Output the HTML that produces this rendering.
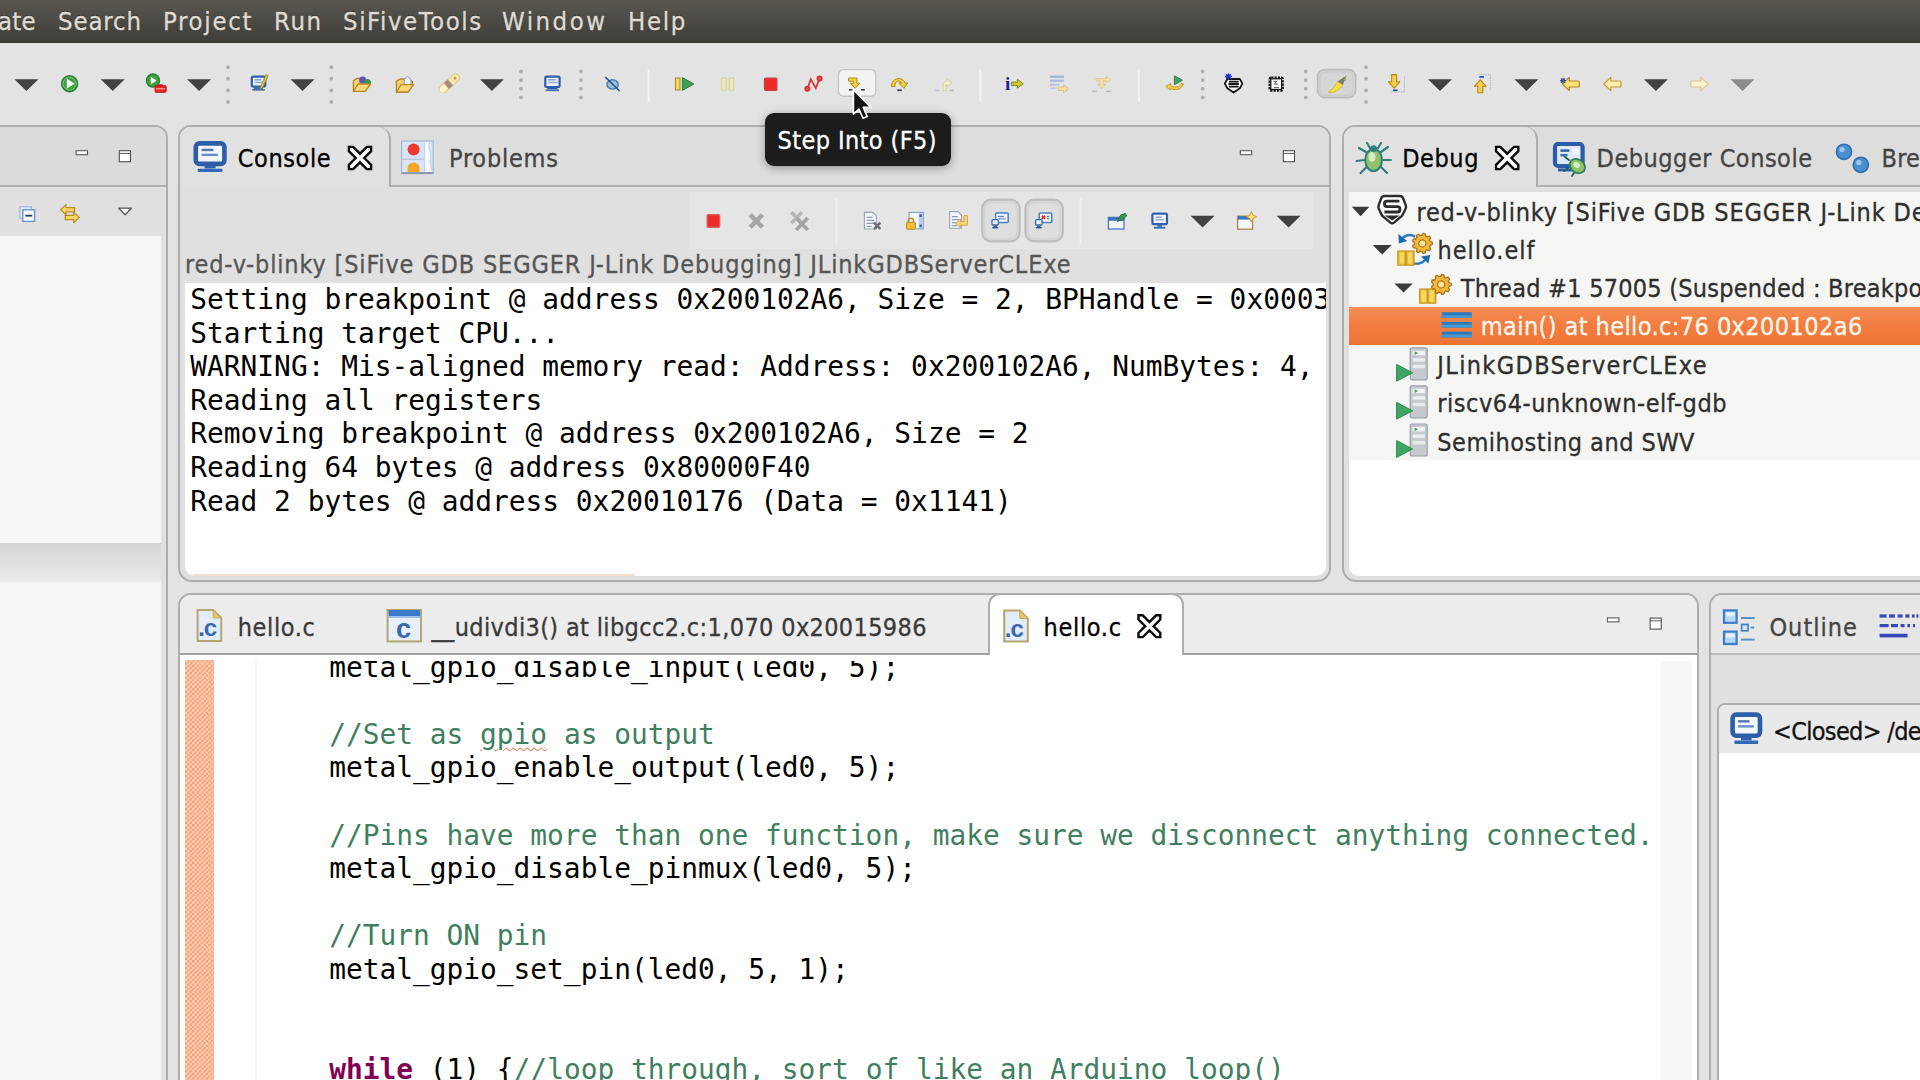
<!DOCTYPE html>
<html lang="en">
<head>
<meta charset="utf-8">
<title>Eclipse Debug</title>
<style>
html,body{margin:0;padding:0;}
body{width:1920px;height:1080px;overflow:hidden;position:relative;background:#e3e3e3;
 font-family:"DejaVu Sans Condensed","DejaVu Sans","Liberation Sans",sans-serif;color:#1a1a1a;}
.abs,.t,.m,.ui{position:absolute;}
.t,.m,.ui{white-space:pre;line-height:1;}
.m{font-family:"DejaVu Sans Mono","Liberation Mono",monospace;font-size:27.85px;color:#000;}
.ui{font-size:26px;color:#222;-webkit-text-stroke:0.3px currentColor;}
#menubar{position:absolute;left:0;top:0;width:1920px;height:43px;
 background:linear-gradient(#59574f 0,#4c4a45 45%,#403f3a 92%,#38372f 100%);}
#menubar .ui{color:#dfdbd2;font-size:25.5px;text-shadow:0 -1px 0 rgba(0,0,0,.35);}
.panel{position:absolute;border:2px solid #adadad;box-sizing:border-box;background:#e0e0e0;}
.hdr{position:absolute;left:0;right:0;top:0;background:#dddddd;border-bottom:2px solid #b2b2b2;box-sizing:border-box;}
.tab{position:absolute;top:-2px;box-sizing:border-box;background:#e2e2e2;border:2px solid #adadad;border-bottom:none;}
svg{position:absolute;overflow:visible;}
.cm,.m i{color:#3f7f5f;font-style:normal;}
.m b{color:#7f0055;font-weight:bold;}
.m u{text-decoration:underline wavy #e8604c 1.4px;text-underline-offset:3px;}
</style>
</head>
<body>

<!-- ===== menu bar ===== -->
<div id="menubar">
<!--MENU-->
 <span class="ui" style="left:-2.1px;top:9.2px;letter-spacing:0.300px">ate</span>
 <span class="ui" style="left:58.0px;top:9.2px;letter-spacing:0.867px">Search</span>
 <span class="ui" style="left:163.0px;top:9.2px;letter-spacing:1.687px">Project</span>
 <span class="ui" style="left:274.0px;top:9.2px;letter-spacing:1.611px">Run</span>
 <span class="ui" style="left:343.0px;top:9.2px;letter-spacing:1.578px">SiFiveTools</span>
 <span class="ui" style="left:502.0px;top:9.2px;letter-spacing:2.518px">Window</span>
 <span class="ui" style="left:628.0px;top:9.2px;letter-spacing:1.627px">Help</span>
<!--/MENU-->
</div>

<!-- ===== main toolbar ===== -->
<svg id="toolbar" style="left:0;top:0" width="1920" height="130" viewBox="0 0 1920 130">
<!--TOOLBAR-->
<polygon points="14.399999999999999,79.2 38.4,79.2 26.4,91" fill="#424242"/>
<polygon points="100.7,79.2 124.7,79.2 112.7,91" fill="#424242"/>
<polygon points="187.1,79.2 211.1,79.2 199.1,91" fill="#424242"/>
<polygon points="290.5,79.2 314.5,79.2 302.5,91" fill="#424242"/>
<polygon points="479.9,79.2 503.9,79.2 491.9,91" fill="#424242"/>
<polygon points="1428,79.2 1452,79.2 1440,91" fill="#424242"/>
<polygon points="1514.4,79.2 1538.4,79.2 1526.4,91" fill="#424242"/>
<polygon points="1643.9,79.2 1667.9,79.2 1655.9,91" fill="#424242"/>
<polygon points="1730.5,79.2 1754.5,79.2 1742.5,91" fill="#8c8c8c"/>
<circle cx="228" cy="67.2" r="1.9" fill="#adadad"/>
<circle cx="228" cy="78.7" r="1.9" fill="#adadad"/>
<circle cx="228" cy="90.4" r="1.9" fill="#adadad"/>
<circle cx="228" cy="101.9" r="1.9" fill="#adadad"/>
<circle cx="331.3" cy="67.2" r="1.9" fill="#adadad"/>
<circle cx="331.3" cy="78.7" r="1.9" fill="#adadad"/>
<circle cx="331.3" cy="90.4" r="1.9" fill="#adadad"/>
<circle cx="331.3" cy="101.9" r="1.9" fill="#adadad"/>
<circle cx="1366" cy="67.2" r="1.9" fill="#adadad"/>
<circle cx="1366" cy="78.7" r="1.9" fill="#adadad"/>
<circle cx="1366" cy="90.4" r="1.9" fill="#adadad"/>
<circle cx="1366" cy="101.9" r="1.9" fill="#adadad"/>
<circle cx="521" cy="71.5" r="1.9" fill="#adadad"/>
<circle cx="521" cy="80.1" r="1.9" fill="#adadad"/>
<circle cx="521" cy="88.7" r="1.9" fill="#adadad"/>
<circle cx="521" cy="97.3" r="1.9" fill="#adadad"/>
<circle cx="581" cy="71.5" r="1.9" fill="#adadad"/>
<circle cx="581" cy="80.1" r="1.9" fill="#adadad"/>
<circle cx="581" cy="88.7" r="1.9" fill="#adadad"/>
<circle cx="581" cy="97.3" r="1.9" fill="#adadad"/>
<circle cx="1202.7" cy="71.5" r="1.9" fill="#adadad"/>
<circle cx="1202.7" cy="80.1" r="1.9" fill="#adadad"/>
<circle cx="1202.7" cy="88.7" r="1.9" fill="#adadad"/>
<circle cx="1202.7" cy="97.3" r="1.9" fill="#adadad"/>
<circle cx="1305.8" cy="71.5" r="1.9" fill="#adadad"/>
<circle cx="1305.8" cy="80.1" r="1.9" fill="#adadad"/>
<circle cx="1305.8" cy="88.7" r="1.9" fill="#adadad"/>
<circle cx="1305.8" cy="97.3" r="1.9" fill="#adadad"/>
<rect x="647.6" y="69" width="2" height="33" fill="#f2f2f2"/>
<rect x="979.3" y="69" width="2" height="33" fill="#f2f2f2"/>
<rect x="1137.8" y="69" width="2" height="33" fill="#f2f2f2"/>
<g><circle cx="69.6" cy="83.7" r="8" fill="#3f9f43" stroke="#2b7d32" stroke-width="1.4"/><circle cx="69.6" cy="83.7" r="6.4" fill="none" stroke="#7cc47c" stroke-width="1"/><polygon points="66.8,78.6 66.8,88.8 74.6,83.7" fill="#f4fbf0"/></g>
<g><circle cx="153" cy="80.6" r="6.6" fill="#3f9f43" stroke="#2b7d32" stroke-width="1.3"/><polygon points="150.8,76.8 150.8,84.4 156.6,80.6" fill="#f4fbf0"/><rect x="155" y="85.6" width="11.2" height="6.8" rx="1.2" fill="#e52222" stroke="#c01414" stroke-width="0.8"/><rect x="158.4" y="84.3" width="4.4" height="1.6" fill="#c01414"/><rect x="156.2" y="88.3" width="8.8" height="1.1" fill="#ffb0a8"/></g>
<g><rect x="251.8" y="76.6" width="13.5" height="10" rx="1.6" fill="#e9f0fb" stroke="#2f5fa9" stroke-width="2.2"/><rect x="254.0" y="87.5" width="9.1" height="1.4" fill="#2f5fa9"/><rect x="252.3" y="89.0" width="12.5" height="1.6" fill="#3c6cb6"/><rect x="254.8" y="79.19999999999999" width="6.5" height="1.3" fill="#6f8fc4"/><rect x="254.8" y="81.8" width="8.5" height="1.3" fill="#8aa3cf"/><polygon points="266.2,74.2 268.2,75.8 262.4,88.2 260.2,89.6 260.4,87" fill="#d9c23a" stroke="#8a7a18" stroke-width="0.7"/></g>
<g><path d="M353.4,80.8 l3.4,-2.4 h4.2 l1.4,2.2 h7 v3.2 l-5.2,7.6 h-10.8 z" fill="#f9d06c" stroke="#b98524" stroke-width="1.3" stroke-linejoin="round"/><circle cx="362.6" cy="80.2" r="3.6" fill="#5a55b8"/><circle cx="367.4" cy="82.6" r="3.5" fill="#3a9444"/><path d="M353.4,91.39999999999999 l4.6,-7.4 h12.6 l-5.4,7.4 z" fill="#fbd978" stroke="#b98524" stroke-width="1.3" stroke-linejoin="round"/></g>
<g><path d="M396.4,81.4 l3.4,-2.4 h4.2 l1.4,2.2 h7 v3.2 l-5.2,7.6 h-10.8 z" fill="#f9d06c" stroke="#b98524" stroke-width="1.3" stroke-linejoin="round"/><path d="M404.2,86 v-6.6 l3.4,-3 l3.4,3 v6.6 z" fill="#f4f6fa" stroke="#7f93b4" stroke-width="1"/><path d="M396.4,92.0 l4.6,-7.4 h12.6 l-5.4,7.4 z" fill="#fbd978" stroke="#b98524" stroke-width="1.3" stroke-linejoin="round"/></g>
<g transform="rotate(-42 449.3 83.4)"><rect x="437.4" y="79.6" width="24" height="7.6" rx="3.6" fill="#f6e8a8" stroke="#e0c88a" stroke-width="1"/><rect x="445.4" y="79.4" width="5.4" height="8" fill="#a88d86"/><rect x="437.6" y="80.6" width="6.4" height="5.6" rx="2" fill="#fbf7cf"/><circle cx="457" cy="83.4" r="1.4" fill="#c79a4a"/></g>
<g><rect x="545.3" y="76.6" width="14.3" height="10.5" rx="1.6" fill="#e9f0fb" stroke="#2f5fa9" stroke-width="2.2"/><rect x="547.5" y="88.0" width="9.9" height="1.4" fill="#2f5fa9"/><rect x="545.8" y="89.5" width="13.3" height="1.6" fill="#3c6cb6"/><rect x="548.3" y="79.19999999999999" width="7.300000000000001" height="1.3" fill="#6f8fc4"/><rect x="548.3" y="81.8" width="9.3" height="1.3" fill="#8aa3cf"/></g>
<g><ellipse cx="612.6" cy="84.4" rx="5.6" ry="4.6" fill="#9cc0dc" stroke="#4c7fb0" stroke-width="1.6"/><line x1="605.2" y1="77" x2="619.6" y2="91" stroke="#2e4f9a" stroke-width="1.7"/></g>
<g><rect x="675.4" y="78" width="4.6" height="12" fill="#f3d45a" stroke="#a98a20" stroke-width="1"/><polygon points="682.4,77.6 682.4,90.4 693.8,84" fill="#3f9f55" stroke="#2b7d3a" stroke-width="1"/></g>
<g fill="#efe9b8" stroke="#d9d098" stroke-width="1"><rect x="721.6" y="78" width="4.6" height="12.2"/><rect x="729.2" y="78" width="4.6" height="12.2"/></g>
<rect x="764.6" y="78.2" width="12.2" height="12" rx="1" fill="#ee2b2b" stroke="#c8403a" stroke-width="1.4"/>
<g stroke="#d63434" fill="none" stroke-width="1.7"><path d="M807.6,88.6 L810.8,79.2 L815.8,88.2 L819.2,79.4"/><circle cx="807.4" cy="88.8" r="2.2" fill="#e65050"/><circle cx="819.6" cy="78.6" r="2.2" fill="#e65050"/></g>
<rect x="838.4" y="69.6" width="37.4" height="26.6" rx="5" fill="#f3f3f3" stroke="#c6c6c6" stroke-width="1.4"/>
<g><path d="M848.6,78 h8.4 v5.2 h2.8 l-4.6,5.2 l-4.6,-5.2 h2.8 v-2 h-4.8 z" fill="#f2cf45" stroke="#b08a1a" stroke-width="1" stroke-linejoin="round"/><rect x="849.0" y="89" width="3.6" height="1.6" fill="#3a3a5a"/><rect x="861.2" y="89" width="3.6" height="1.6" fill="#3a3a5a"/></g>
<g><path d="M891.6,86.4 c-0.6,-8.6 11,-10.6 13.4,-3.4 h2.6 l-3.8,5.4 l-5,-5.4 h2.8 c-1.6,-3.4 -7,-2.6 -6.6,3.4 z" fill="#f2cf45" stroke="#b08a1a" stroke-width="1" stroke-linejoin="round"/><rect x="897.4" y="89.4" width="4.4" height="1.7" fill="#3a3a5a"/></g>
<g><path d="M943,90.6 v-6 c0,-2.2 1.8,-3.4 4,-3.4 v-2.6 l5,4.2 l-5,4.2 v-2.6 c-0.8,0 -1.2,0.4 -1.2,1.2 v5 z" fill="#f1ecd0" stroke="#d8cfa4" stroke-width="1" stroke-linejoin="round"/><rect x="935.4" y="89.6" width="4" height="1.5" fill="#b8b8c4"/><rect x="949.6" y="89.6" width="4.4" height="1.5" fill="#b8b8c4"/></g>
<text x="1005" y="89.8" font-family="Liberation Serif,DejaVu Serif,serif" font-weight="bold" font-size="19" fill="#1b1bb0">i</text>
<path d="M1011.4,82.2 h6 v-2.8 l5.8,4.4 l-5.8,4.4 v-2.8 h-6 z" fill="#cfd030" stroke="#7e8010" stroke-width="1" stroke-linejoin="round"/>
<g><rect x="1050" y="75.6" width="14" height="2.2" fill="#9fb6d6"/><rect x="1050" y="79.6" width="14" height="2.2" fill="#a9bedb"/><rect x="1050" y="83.6" width="9" height="2.2" fill="#b4c6df"/><rect x="1050" y="87.4" width="7" height="1.6" fill="#c0cfe3"/><path d="M1058.4,87.2 h5 v-2.6 l5,4.2 l-5,4.2 v-2.6 h-5 z" fill="#f4deA0" stroke="#dcc27c" stroke-width="1" stroke-linejoin="round"/></g>
<g><path d="M1096,78.6 h10.4 v-2.4 l4.4,3.4 l-4.4,3.4 v-2.2 h-3.2 v3.6 h2.4 l-4,4.2 l-4,-4.2 h2.4 v-3.6 h-4 z" fill="#f6e3b4" stroke="#e0c690" stroke-width="1" stroke-linejoin="round"/><rect x="1092" y="90.6" width="4.6" height="1.5" fill="#b4b8c8"/><rect x="1106" y="90.6" width="4.6" height="1.5" fill="#b4b8c8"/></g>
<g><polygon points="1174.4,75.8 1174.4,84.8 1182.4,80.2" fill="#3f9f6a" stroke="#2b7d4a" stroke-width="0.9"/><path d="M1170.6,83.4 l-4.8,3 l4.4,3.6 v-2 c3.2,2.6 9.6,2.2 11.8,-1.6 l1.4,-2.6 l-2.4,-0.4 c-1.2,3.6 -6.4,5 -10.4,2.2 z" fill="#f5cf52" stroke="#c79a20" stroke-width="1" stroke-linejoin="round"/></g>
<g><path d="M1227.4,79 h12.4 l2.6,4.6 l-2.6,4.6 l-6.2,4.4 l-6.2,-4.4 l-2.6,-4.6 z" fill="#fff" stroke="#151515" stroke-width="1.8" stroke-linejoin="round"/><path d="M1229,81.6 h9.6 M1238.8,84 h-10.4 M1229,86.6 h9.6" stroke="#151515" stroke-width="1.9" fill="none"/><path d="M1225,76.4 h7 M1228.4,73.6 v5.8 M1226,74.2 l4.8,4.6 M1230.8,74.2 l-4.8,4.6" stroke="#1b37c8" stroke-width="1.5"/></g>
<g><rect x="1269.6" y="77.6" width="13.2" height="13" rx="1.6" fill="#fff" stroke="#111" stroke-width="2.2" stroke-dasharray="2.2 1.1"/><rect x="1270.8" y="78.8" width="10.8" height="10.6" fill="#fff" stroke="#111" stroke-width="1.2"/><path d="M1273.6,81.4 h3 l-2.2,2.8 h3.4 M1274,87.4 h5" stroke="#555" stroke-width="1" fill="none"/></g>
<rect x="1317.6" y="69.6" width="38" height="28" rx="7" fill="#d6d6d6" stroke="#bcbcbc" stroke-width="1.6"/><rect x="1320" y="72" width="33.2" height="23.2" rx="5" fill="none" stroke="#cdcdcd" stroke-width="1.6"/>
<g><path d="M1328.4,92.2 c4.6,1.8 11,-2.2 14.6,-7.4 l-5.4,-3.2 c-2.4,4.4 -5.6,8.2 -9.2,10.6 z" fill="#f7de48" stroke="#d8b82a" stroke-width="0.9"/><path d="M1337.6,81.6 l5.4,3.2 l3.4,-9.4 z" fill="#7d7d6a"/><path d="M1343.4,80.4 l3,-5 l-0.6,5.8 z" fill="#9aa77a"/></g>
<g><path d="M1391.6000000000001,74.6 h5 v7.2 h3.2 l-5.7,6.4 l-5.7,-6.4 h3.2 z" fill="#f7cf48" stroke="#b5861c" stroke-width="1.1" stroke-linejoin="round"/><path d="M1404.4,77 v15 M1391.4,91.8 h13" stroke="#aeb4c2" stroke-width="1" stroke-dasharray="1.4 1" fill="none"/><rect x="1393.0" y="89.4" width="4.6" height="1.8" fill="#2a55b0"/></g>
<g><path d="M1477.8000000000002,92.8 h5 v-6.6 h3.2 l-5.7,-6.4 l-5.7,6.4 h3.2 z" fill="#f7cf48" stroke="#b5861c" stroke-width="1.1" stroke-linejoin="round"/><path d="M1490.4,75 v15 M1478.4,74.6 h12" stroke="#aeb4c2" stroke-width="1" stroke-dasharray="1.4 1" fill="none"/><rect x="1479.4" y="76" width="4.6" height="1.8" fill="#2a55b0"/></g>
<path d="M1562.2,84 l7,-6.6 v3.6 h8.6 q1.6,0 1.6,1.6 v2.8 q0,1.6 -1.6,1.6 h-8.6 v3.6 z" fill="#fbe27a" stroke="#b5861c" stroke-width="1.2" stroke-linejoin="round"/>
<path d="M1560,80.6 h6 M1563,77.8 v5.6 M1560.8,78.4 l4.4,4.4 M1565.2,78.4 l-4.4,4.4" stroke="#3a4fa0" stroke-width="1.1"/>
<path d="M1603.8,84 l7,-6.6 v3.6 h8.6 q1.6,0 1.6,1.6 v2.8 q0,1.6 -1.6,1.6 h-8.6 v3.6 z" fill="#fdeeb0" stroke="#c8962a" stroke-width="1.2" stroke-linejoin="round"/>
<path d="M1708.0,84 l-7,-6.6 v3.6 h-8.6 q-1.6,0 -1.6,1.6 v2.8 q0,1.6 1.6,1.6 h8.6 v3.6 z" fill="#fbf3d2" stroke="#dcc48c" stroke-width="1.2" stroke-linejoin="round"/>
<!--/TOOLBAR-->
</svg>

<!-- ===== left panel ===== -->
<div id="leftp" class="panel" style="left:-20px;top:125px;width:188px;height:1000px;border-radius:0 13px 0 0;">
 <div class="hdr" style="height:60px;border-radius:0 11px 0 0;background:#dbdbdb"></div>
 <div class="abs" style="left:0;top:109px;width:179px;height:900px;background:#f6f7f5"></div>
 <div class="abs" style="left:0;top:416px;width:179px;height:39px;background:linear-gradient(#d6d5d2 0,#dddcda 35%,#e6e5e3 75%,#eeedeb 100%)"></div>
</div>
<svg id="lefticons" style="left:0;top:0" width="200" height="260" viewBox="0 0 200 260">
<!--LEFTICONS-->
<rect x="76.1" y="150.70000000000002" width="11.4" height="4" fill="#fff" stroke="#5c5c5c" stroke-width="1.1"/>
<g><rect x="119.3" y="150.7" width="11.2" height="11" fill="#fff" stroke="#4e4e4e" stroke-width="1.1"/><rect x="119.3" y="152.89999999999998" width="11.2" height="1" fill="#5a5a5a"/></g>
<g><rect x="19.8" y="206.8" width="11.6" height="11.4" fill="#dfe9f8" stroke="#9db6dc" stroke-width="1.2"/><rect x="22.8" y="209.8" width="11.8" height="11.6" fill="#f6f9fe" stroke="#6f94cc" stroke-width="1.4"/><rect x="25.4" y="214.8" width="6.8" height="1.8" fill="#223a6a"/></g>
<g fill="#f8d568" stroke="#b98a22" stroke-width="1.2" stroke-linejoin="round"><path d="M60.6,209.6 l5.4,-5 v3 h8.6 v4.2 h-8.6 v3 z"/><path d="M79.2,217.4 l-5.4,-5 v3 h-8.6 v4.2 h8.6 v3 z"/></g>
<polygon points="118.8,208.2 131.4,208.2 125.1,214.8" fill="#fff" stroke="#555" stroke-width="1.3" stroke-linejoin="round"/>
<!--/LEFTICONS-->
</svg>

<!-- ===== console panel ===== -->
<div id="consolep" class="panel" style="left:178px;top:125px;width:1153px;height:457px;border-radius:13px 13px 14px 14px;">
 <div class="hdr" style="height:60px;border-radius:11px 11px 0 0;"></div>
 <div class="tab" style="left:0;top:0;width:211px;height:60px;border-radius:11px 12px 0 0;border-left:none;border-top:none;background:#e1e1e1"></div>
 <div class="abs" style="left:509px;top:65px;width:624px;height:57px;background:#e5e5e5"></div>
 <div class="abs" id="context" style="left:5px;top:156px;width:1141px;height:293px;background:#fff;border-radius:0 0 10px 10px;overflow:hidden">
<!--CONSOLETEXT-->
<div class="m" style="left:5.3px;top:3.2px">Setting breakpoint @ address 0x200102A6, Size = 2, BPHandle = 0x0003</div>
<div class="m" style="left:5.3px;top:36.8px">Starting target CPU...</div>
<div class="m" style="left:5.3px;top:70.3px">WARNING: Mis-aligned memory read: Address: 0x200102A6, NumBytes: 4, </div>
<div class="m" style="left:5.3px;top:103.9px">Reading all registers</div>
<div class="m" style="left:5.3px;top:137.4px">Removing breakpoint @ address 0x200102A6, Size = 2</div>
<div class="m" style="left:5.3px;top:171.0px">Reading 64 bytes @ address 0x80000F40</div>
<div class="m" style="left:5.3px;top:204.5px">Read 2 bytes @ address 0x20010176 (Data = 0x1141)</div>
<!--/CONSOLETEXT-->
 <div class="abs" style="left:8px;top:291px;width:442px;height:2px;background:#f6ddd1"></div>
 </div>
</div>

<!-- ===== debug panel ===== -->
<div id="debugp" class="panel" style="left:1342px;top:125px;width:700px;height:457px;border-radius:13px 0 0 14px;">
 <div class="hdr" style="height:60px;border-radius:11px 0 0 0;"></div>
 <div class="tab" style="left:0;top:0;width:194px;height:60px;border-radius:11px 12px 0 0;border-left:none;border-top:none;background:#e1e1e1"></div>
 <div class="abs" style="left:5px;top:65px;width:700px;height:384px;background:#fff;border-radius:0 0 0 10px;"></div>
 <div class="abs" style="left:5px;top:65px;width:700px;height:268px;background:#f5f6f4;"></div>
 <div class="abs" style="left:5px;top:180px;width:700px;height:38px;background:linear-gradient(#f68d54 0,#f27d40 45%,#ef7536 100%)"></div>
</div>

<!-- ===== editor panel ===== -->
<div id="editorp" class="panel" style="left:178px;top:593px;width:1521px;height:600px;border-radius:13px 13px 0 0;">
 <div class="hdr" style="height:60px;border-radius:11px 11px 0 0;background:#ececec;border-bottom-color:#a0a0a0"></div>
 <div class="tab" style="left:808px;width:196px;height:63px;border-radius:12px 12px 0 0;background:#fff"></div>
 <div class="abs" style="left:0;top:60px;width:1517px;height:500px;background:#fff"></div>
 <div class="abs" style="left:1481px;top:66px;width:31px;height:500px;background:#f7f7f7"></div>
 <div class="abs" style="left:75px;top:66px;width:2px;height:500px;background:#f3f3f3"></div>
 <div class="abs" id="orangestrip" style="left:5px;top:65px;width:29px;height:500px;background-color:#fdccae;background-image:linear-gradient(45deg,#f2a27c 25%,transparent 25%,transparent 75%,#f2a27c 75%),linear-gradient(45deg,#f2a27c 25%,transparent 25%,transparent 75%,#f2a27c 75%);background-size:4.7px 4.7px;background-position:0 0,2.35px 2.35px;"></div>
 <div class="abs" id="code" style="left:0;top:66px;width:1482px;height:500px;overflow:hidden">
<!--CODE-->
<div class="m" style="left:149.2px;top:-7.2px">metal_gpio_disable_input(led0, 5);</div>
<div class="m cm" style="left:149.2px;top:59.9px">//Set as <u>gpio</u> as output</div>
<div class="m" style="left:149.2px;top:93.4px">metal_gpio_enable_output(led0, 5);</div>
<div class="m cm" style="left:149.2px;top:160.5px">//Pins have more than one function, make sure we disconnect anything connected.</div>
<div class="m" style="left:149.2px;top:194.1px">metal_gpio_disable_pinmux(led0, 5);</div>
<div class="m cm" style="left:149.2px;top:261.2px">//Turn ON pin</div>
<div class="m" style="left:149.2px;top:294.7px">metal_gpio_set_pin(led0, 5, 1);</div>
<div class="m" style="left:149.2px;top:395.4px"><b>while</b> (1) {<i>//loop through, sort of like an Arduino loop()</i></div>
<!--/CODE-->
 </div>
</div>

<!-- ===== outline panel ===== -->
<div id="outlinep" class="panel" style="left:1709px;top:593px;width:400px;height:600px;border-radius:13px 0 0 0;">
 <div class="hdr" style="height:60px;border-radius:11px 0 0 0;background:#e6e6e6;border-bottom-color:#bcbcbc"></div>
 <div class="abs" style="left:6px;top:108px;width:400px;height:500px;border:2px solid #aeaeae;border-radius:8px 0 0 0;background:#fff;box-sizing:border-box">
  <div class="abs" style="left:0;top:0;width:400px;height:48px;background:#e9e9e9;border-radius:6px 0 0 0"></div>
 </div>
</div>

<!-- ===== panel text + icons ===== -->
<div id="labels">
<!--LABELS-->
<span class="ui" style="left:237.8px;top:146.3px;font-size:25px;letter-spacing:0.576px;color:#000">Console</span>
<span class="ui" style="left:449.0px;top:146.3px;font-size:25px;letter-spacing:0.775px;color:#444">Problems</span>
<span class="ui" style="left:185.0px;top:251.8px;font-size:25px;letter-spacing:0.841px;color:#555">red-v-blinky [SiFive GDB SEGGER J-Link Debugging] JLinkGDBServerCLExe</span>
<span class="ui" style="left:1402.2px;top:146.0px;font-size:25px;letter-spacing:0.578px;color:#000">Debug</span>
<span class="ui" style="left:1596.6px;top:146.0px;font-size:25px;letter-spacing:0.507px;color:#444">Debugger Console</span>
<span class="ui" style="left:1881.5px;top:146.0px;font-size:25px;letter-spacing:0.200px;color:#444">Bre</span>
<span class="ui" style="left:1416.4px;top:199.7px;font-size:25px;letter-spacing:0.841px;color:#2e2e2e">red-v-blinky [SiFive GDB SEGGER J-Link De</span>
<span class="ui" style="left:1437.6px;top:237.5px;font-size:25px;letter-spacing:0.955px;color:#2e2e2e">hello.elf</span>
<span class="ui" style="left:1460.7px;top:275.8px;font-size:25px;letter-spacing:0.242px;color:#2e2e2e">Thread #1 57005 (Suspended : Breakpo</span>
<span class="ui" style="left:1480.7px;top:314.4px;font-size:25px;letter-spacing:0.419px;color:#fff8ee">main() at hello.c:76 0x200102a6</span>
<span class="ui" style="left:1437.3px;top:352.7px;font-size:25px;letter-spacing:1.344px;color:#2e2e2e">JLinkGDBServerCLExe</span>
<span class="ui" style="left:1437.3px;top:391.1px;font-size:25px;letter-spacing:0.530px;color:#2e2e2e">riscv64-unknown-elf-gdb</span>
<span class="ui" style="left:1437.3px;top:429.5px;font-size:25px;letter-spacing:0.504px;color:#2e2e2e">Semihosting and SWV</span>
<span class="ui" style="left:237.7px;top:615.1px;font-size:25px;letter-spacing:0.646px;color:#3a3a3a">hello.c</span>
<span class="ui" style="left:431.5px;top:615.1px;font-size:25px;letter-spacing:0.360px;color:#3a3a3a">__udivdi3() at libgcc2.c:1,070 0x20015986</span>
<span class="ui" style="left:1043.5px;top:615.1px;font-size:25px;letter-spacing:0.679px;color:#000">hello.c</span>
<span class="ui" style="left:1769.4px;top:615.1px;font-size:25px;letter-spacing:1.021px;color:#444">Outline</span>
<span class="ui" style="left:1773.0px;top:718.5px;font-size:25px;letter-spacing:-0.680px;color:#111">&lt;Closed&gt; /de</span>
<!--/LABELS-->
</div>
<svg id="icons" style="left:0;top:0" width="1920" height="1080" viewBox="0 0 1920 1080">
<!--ICONS-->
<g><rect x="195.8" y="143.4" width="28.6" height="20.480000000000004" rx="3.6" fill="#f2f6fd" stroke="#2d5fa9" stroke-width="4.6"/><rect x="204.55800000000002" y="165.68" width="11.084000000000001" height="2.754" fill="#2f63ae"/><rect x="197.71200000000002" y="168.63400000000001" width="24.776" height="3.366" rx="1" fill="#3568b4"/><rect x="201.62400000000002" y="148.744" width="11.736" height="2.4" fill="#5674b4"/><rect x="201.62400000000002" y="153.64000000000001" width="16.3" height="2.4" fill="#6f8ac4"/></g>
<polygon points="348.9,146.9 353.2,146.9 360.0,153.7 366.8,146.9 371.1,146.9 371.1,151.2 364.3,158.0 371.1,164.8 371.1,169.1 366.8,169.1 360.0,162.3 353.2,169.1 348.9,169.1 348.9,164.8 355.7,158.0 348.9,151.2" fill="#fff" stroke="#0a0a0a" stroke-width="2.4" stroke-linejoin="miter"/>
<g><rect x="401.6" y="141" width="31.6" height="32.6" fill="#d7e6f7" stroke="#a8b8cc" stroke-width="1.2"/><path d="M424.4,141.6 h5.4 c-2.6,7 2.2,9.4 0.6,16.6 c-1,5 0.8,10 2.4,14.8 h-8.4 z" fill="#f4f8fd" stroke="#b8c6d8" stroke-width="0.8"/><rect x="402" y="158.6" width="22" height="1.2" fill="#b4c4d8"/><circle cx="413.6" cy="149.6" r="6" fill="#ec3a30"/><path d="M407.6,172.8 v-4.6 a6,5.6 0 0 1 12,0 v4.6 z" fill="#f5a623"/><rect x="401.6" y="172" width="31.6" height="2" fill="#8f9cb0"/></g>
<rect x="1240.3" y="150.70000000000002" width="11.4" height="4" fill="#fff" stroke="#5c5c5c" stroke-width="1.1"/>
<g><rect x="1283.3" y="150.7" width="11.2" height="11" fill="#fff" stroke="#4e4e4e" stroke-width="1.1"/><rect x="1283.3" y="152.89999999999998" width="11.2" height="1" fill="#5a5a5a"/></g>
<rect x="707.2" y="214.8" width="12.4" height="12.4" rx="1" fill="#ee2b2b" stroke="#d86058" stroke-width="1.4"/>
<g stroke="#a6a6a6" stroke-width="4.6" stroke-linecap="square"><path d="M751.8,216.4 l9,9.2 M760.8,216.4 l-9,9.2"/></g>
<g stroke="#a4a4a4" stroke-width="3.6" stroke-linecap="square"><path d="M792.6,213.6 l8,8.4 M800.6,213.6 l-8,8.4" stroke="#b8b8b8"/><path d="M797.4,219.4 l9,9.2 M806.4,219.4 l-9,9.2"/></g>
<rect x="835.4" y="198" width="2" height="46" fill="#efefef"/><rect x="1079.6" y="198" width="2" height="46" fill="#efefef"/>
<g><path d="M864.4,212.4 h8.4 l3.6,3.6 v13 h-12 z" fill="#f4f6fa" stroke="#9aa4b4" stroke-width="1.1"/><path d="M866.6,217.4 h6 M866.6,220.4 h7.6 M866.6,223.4 h7.6 M866.6,226.4 h5" stroke="#8c9cb8" stroke-width="1.1"/><path d="M874,222.6 l6.4,6.4 M880.4,222.6 l-6.4,6.4" stroke="#6a6a6a" stroke-width="2.4"/></g>
<g><rect x="909" y="212.4" width="14.4" height="16.4" fill="#f8fafd" stroke="#8da4c4" stroke-width="1.2"/><rect x="918.6" y="213" width="4.2" height="15.2" fill="#b9cdea"/><rect x="919.4" y="214.4" width="2.6" height="2.6" fill="#3f66b0"/><rect x="919.4" y="224.6" width="2.6" height="2.6" fill="#3f66b0"/><path d="M908.4,222.6 v-1.8 a2.6,2.6 0 0 1 5.2,0 v1.8" fill="none" stroke="#b98a22" stroke-width="1.5"/><rect x="906.6" y="222.2" width="8.8" height="7" rx="0.8" fill="#f5bf3a" stroke="#b98a22" stroke-width="1"/></g>
<g><path d="M949.6,211.6 h8.4 l3.6,3.6 v13 h-12 z" fill="#f4f6fa" stroke="#9aa4b4" stroke-width="1.1"/><path d="M951.8000000000001,216.6 h6 M951.8000000000001,219.6 h7.6 M951.8000000000001,222.6 h7.6 M951.8000000000001,225.6 h5" stroke="#8c9cb8" stroke-width="1.1"/><path d="M964,215.6 v6 h-3.6 v-2.6 l-4.8,4.4 l4.8,4.4 v-2.6 h7 v-9.6 z" fill="#f7d878" stroke="#c8a040" stroke-width="0.9" stroke-linejoin="round"/></g>
<rect x="982.2" y="199.6" width="37.4" height="41.8" rx="9" fill="#dedede" stroke="#bdbdbd" stroke-width="2.2"/><rect x="984.6" y="202" width="32.6" height="37" rx="7" fill="none" stroke="#d2d2d2" stroke-width="1.4"/>
<rect x="1025.4" y="199.6" width="37.4" height="41.8" rx="9" fill="#dedede" stroke="#bdbdbd" stroke-width="2.2"/><rect x="1027.8000000000002" y="202" width="32.6" height="37" rx="7" fill="none" stroke="#d2d2d2" stroke-width="1.4"/>
<g><rect x="995.6" y="213" width="12.6" height="9.4" rx="1" fill="#f4f8fd" stroke="#4a80c4" stroke-width="1.5"/><rect x="998.0" y="215.8" width="6" height="1.3" fill="#5a7ec0"/><rect x="998.0" y="218.2" width="7.6" height="1.3" fill="#7a98cc"/><rect x="992.0" y="219.6" width="6.4" height="5.4" rx="1" fill="#e8f0fa" stroke="#3f6aa8" stroke-width="1.3"/><rect x="993.4" y="225.6" width="3.6" height="1.4" fill="#2f5a98"/><rect x="992.2" y="227" width="6" height="1.4" fill="#2f5a98"/></g>
<g><rect x="1039.2" y="213" width="12.6" height="9.4" rx="1" fill="#f4f8fd" stroke="#4a80c4" stroke-width="1.5"/><path d="M1041.8,215.6 l3.4,3.4 M1045.2,215.6 l-3.4,3.4" stroke="#d83030" stroke-width="1.7"/><rect x="1047.0" y="215.8" width="2.2" height="1.3" fill="#5a7ec0"/><rect x="1047.0" y="218.2" width="2.2" height="1.3" fill="#5a7ec0"/><rect x="1035.6000000000001" y="219.6" width="6.4" height="5.4" rx="1" fill="#e8f0fa" stroke="#3f6aa8" stroke-width="1.3"/><rect x="1037.0" y="225.6" width="3.6" height="1.4" fill="#2f5a98"/><rect x="1035.8" y="227" width="6" height="1.4" fill="#2f5a98"/></g>
<g><rect x="1108.4" y="217.4" width="15.6" height="11.6" fill="#f4f7fc" stroke="#4a78ba" stroke-width="1.3"/><rect x="1108.4" y="217.4" width="15.6" height="3.4" fill="#3b74c4"/><path d="M1117.4,221.4 l3.4,-6.6 l4.6,-1.4 l1.2,2.6 l-3.6,3.4 z" fill="#2f9a4a" stroke="#1f6a30" stroke-width="0.9"/></g>
<g><rect x="1152.4" y="213.6" width="14.6" height="10.6" rx="1.4" fill="#eef3fc" stroke="#2f63ae" stroke-width="2.2"/><rect x="1155.6" y="216.6" width="6" height="1.2" fill="#6f8dc6"/><rect x="1155.6" y="219.2" width="8.4" height="1.2" fill="#8aa2d0"/><rect x="1157.4" y="225.2" width="4.6" height="1.6" fill="#2f63ae"/><rect x="1154" y="226.8" width="11.4" height="1.8" fill="#3568b4"/></g>
<polygon points="1190.6,215.8 1214.6,215.8 1202.6,227.4" fill="#424242"/>
<g><rect x="1237.6" y="216.2" width="15" height="13" fill="#f6f8fc" stroke="#a08a4a" stroke-width="1.3"/><rect x="1237.6" y="216.2" width="15" height="3.4" fill="#3b74c4"/><path d="M1251.4,211.6 l1.6,3.6 l3.6,1.6 l-3.6,1.6 l-1.6,3.6 l-1.6,-3.6 l-3.6,-1.6 l3.6,-1.6 z" fill="#fbe27a" stroke="#c89a2a" stroke-width="0.9"/></g>
<polygon points="1276.6,215.8 1300.6,215.8 1288.6,227.4" fill="#424242"/>
<g><g stroke="#2f7f7a" stroke-width="2.2" stroke-linecap="round" fill="none"><path d="M1366,152 l-7,-4 M1364.6,160 l-8,1 M1366.6,167 l-6,6 M1381,152 l7,-5 M1383,160 l8,0 M1381,167 l6,6 M1370,148 l-3,-5 M1378,148 l3,-5"/></g><ellipse cx="1373.6" cy="160" rx="8.4" ry="11" fill="#8fc06a" stroke="#2f7f7a" stroke-width="2"/><ellipse cx="1372" cy="157" rx="3.6" ry="5" fill="#d4ecc0"/><circle cx="1373.6" cy="148.6" r="3.4" fill="#2f7f7a"/></g>
<polygon points="1496.1,146.9 1500.4,146.9 1507.2,153.7 1514.0,146.9 1518.3,146.9 1518.3,151.2 1511.5,158.0 1518.3,164.8 1518.3,169.1 1514.0,169.1 1507.2,162.3 1500.4,169.1 1496.1,169.1 1496.1,164.8 1502.9,158.0 1496.1,151.2" fill="#fff" stroke="#0a0a0a" stroke-width="2.4" stroke-linejoin="miter"/>
<g><rect x="1555" y="144" width="27.6" height="22" rx="3" fill="#dfe8f7" stroke="#2a5ca8" stroke-width="4.2"/><rect x="1560.4" y="149.4" width="9" height="2.4" fill="#2a5ca8"/><rect x="1560.4" y="154" width="7" height="2.4" fill="#3a6cb8"/><rect x="1572.4" y="148.6" width="6.4" height="5.6" fill="#f4f8fe"/><rect x="1558" y="168.4" width="14" height="3" fill="#2a5ca8"/><g stroke="#1f5f5a" stroke-width="1.8" stroke-linecap="round"><path d="M1569,160 l-4,-3 M1568,168 l-4,3 M1574,173 l-2,3"/></g><ellipse cx="1577.4" cy="166" rx="8.2" ry="6.6" transform="rotate(35 1577.4 166)" fill="#8fc06a" stroke="#2f7f5a" stroke-width="1.8"/><ellipse cx="1576.6" cy="165" rx="3.6" ry="2.6" transform="rotate(35 1576.6 165)" fill="#d4ecc0"/></g>
<g fill="#4b90cf" stroke="#2f6fae" stroke-width="1.6"><circle cx="1844" cy="151.8" r="7.6"/><circle cx="1860.8" cy="164.8" r="7.6"/></g><circle cx="1842" cy="149.6" r="2.6" fill="#9cc8ee"/><circle cx="1858.8" cy="162.6" r="2.6" fill="#9cc8ee"/>
<polygon points="1351.8,206.8 1369.4,206.8 1360.6,216.2" fill="#3a3a3a"/>
<polygon points="1372.8,245 1391.6,245 1382.1999999999998,254.6" fill="#3a3a3a"/>
<polygon points="1394.4,283.4 1412.8,283.4 1403.6,292.6" fill="#3a3a3a"/>
<g><path d="M1384.6,196 h15.2 q2.4,0 3.2,2 l2.8,7.4 q0.6,1.8 -0.2,3.4 l-2.8,5.8 q-0.8,1.6 -2.4,2.6 l-6.4,5.4 q-1.8,1.4 -3.6,0 l-6.4,-5.4 q-1.6,-1 -2.4,-2.6 l-2.8,-5.8 q-0.8,-1.6 -0.2,-3.4 l2.8,-7.4 q0.8,-2 3.2,-2 z" fill="#fff" stroke="#2c2c2c" stroke-width="2.4" stroke-linejoin="round"/><path d="M1399.4,201.2 h-12.4 q-2.6,0 -2.6,2.6 q0,2.8 2.6,2.8 h10.4 q2.6,0 2.6,2.6 q0,2.8 -2.6,2.8 h-13" fill="none" stroke="#2c2c2c" stroke-width="2.8"/><path d="M1384.6,215.4 h15.2 l-7.6,5 z" fill="#2c2c2c"/></g>
<g fill="none" stroke="#2f78c0" stroke-width="2.4"><path d="M1415,236.6 q-7,-4 -13,2"/><path d="M1414,263.4 q8,1.6 12,-5"/></g><polygon points="1398.4,234 1398.8,243.6 1407.2,241" fill="#1f68b0"/><polygon points="1430.2,255 1421,256.4 1428.4,263.6" fill="#1f68b0"/>
<g><rect x="1397.2" y="250.4" width="17.4" height="15.4" fill="#c89a1e"/><rect x="1399.0" y="252.0" width="5.6" height="12.2" fill="#f6d860" stroke="#e8b830" stroke-width="0.8"/><rect x="1407.2" y="252.0" width="5.6" height="12.2" fill="#f6d860" stroke="#e8b830" stroke-width="0.8"/></g>
<g><polygon points="1432.3,242.3 1432.3,244.5 1430.2,245.3 1429.6,246.9 1430.7,248.9 1429.3,250.6 1427.1,249.8 1425.6,250.7 1425.2,253.0 1423.0,253.4 1421.9,251.4 1420.2,251.1 1418.4,252.6 1416.5,251.5 1416.9,249.2 1415.7,247.8 1413.4,247.8 1412.7,245.8 1414.4,244.3 1414.4,242.5 1412.7,241.0 1413.4,239.0 1415.7,239.0 1416.9,237.6 1416.5,235.3 1418.4,234.2 1420.2,235.7 1421.9,235.4 1423.0,233.4 1425.2,233.8 1425.6,236.1 1427.1,237.0 1429.3,236.2 1430.7,237.9 1429.6,239.9 1430.2,241.5" fill="#f4b63a" stroke="#a8741a" stroke-width="1.3" stroke-linejoin="round"/><circle cx="1422.4" cy="243.4" r="3.6" fill="#fbe29a" stroke="#a8741a" stroke-width="1.2"/></g>
<g><rect x="1419" y="288.4" width="17.4" height="15.4" fill="#c89a1e"/><rect x="1420.8" y="290.0" width="5.6" height="12.2" fill="#f6d860" stroke="#e8b830" stroke-width="0.8"/><rect x="1429" y="290.0" width="5.6" height="12.2" fill="#f6d860" stroke="#e8b830" stroke-width="0.8"/></g>
<g><polygon points="1451.1,283.3 1451.1,285.5 1449.0,286.3 1448.4,287.9 1449.5,289.9 1448.1,291.6 1445.9,290.8 1444.4,291.7 1444.0,294.0 1441.8,294.4 1440.7,292.4 1439.0,292.1 1437.2,293.6 1435.3,292.5 1435.7,290.2 1434.5,288.8 1432.2,288.8 1431.5,286.8 1433.2,285.3 1433.2,283.5 1431.5,282.0 1432.2,280.0 1434.5,280.0 1435.7,278.6 1435.3,276.3 1437.2,275.2 1439.0,276.7 1440.7,276.4 1441.8,274.4 1444.0,274.8 1444.4,277.1 1445.9,278.0 1448.1,277.2 1449.5,278.9 1448.4,280.9 1449.0,282.5" fill="#f4b63a" stroke="#a8741a" stroke-width="1.3" stroke-linejoin="round"/><circle cx="1441.2" cy="284.4" r="3.6" fill="#fbe29a" stroke="#a8741a" stroke-width="1.2"/></g>
<rect x="1441.8" y="312.2" width="30" height="5.8" fill="#2f7ab8"/><rect x="1441.8" y="315.2" width="30" height="2.8" fill="#4a9ad0"/>
<rect x="1441.8" y="321.8" width="30" height="5.8" fill="#2f7ab8"/><rect x="1441.8" y="324.8" width="30" height="2.8" fill="#4a9ad0"/>
<rect x="1441.8" y="331.6" width="30" height="5.8" fill="#2f7ab8"/><rect x="1441.8" y="334.6" width="30" height="2.8" fill="#4a9ad0"/>
<g><rect x="1410.2" y="347.8" width="17" height="32" rx="2" fill="#c6cace" stroke="#9a9fa6" stroke-width="1.2"/><rect x="1412.6" y="350.8" width="12.2" height="4.4" fill="#f2f3f4"/><rect x="1412.6" y="358.2" width="12.2" height="3.4" fill="#eceeef"/><rect x="1412.6" y="364.8" width="12.2" height="3.4" fill="#e8eaec"/><polygon points="1414.6,351.2 1414.6,355.0 1418,353.0" fill="#4a9a5a"/><polygon points="1396.6,364.40000000000003 1396.6,381.2 1412.6,372.8" fill="#3fa564" stroke="#2f8a4e" stroke-width="1"/></g>
<g><rect x="1410.2" y="385.8" width="17" height="32" rx="2" fill="#c6cace" stroke="#9a9fa6" stroke-width="1.2"/><rect x="1412.6" y="388.8" width="12.2" height="4.4" fill="#f2f3f4"/><rect x="1412.6" y="396.2" width="12.2" height="3.4" fill="#eceeef"/><rect x="1412.6" y="402.8" width="12.2" height="3.4" fill="#e8eaec"/><polygon points="1414.6,389.2 1414.6,393.0 1418,391.0" fill="#4a9a5a"/><polygon points="1396.6,402.40000000000003 1396.6,419.2 1412.6,410.8" fill="#3fa564" stroke="#2f8a4e" stroke-width="1"/></g>
<g><rect x="1410.2" y="424" width="17" height="32" rx="2" fill="#c6cace" stroke="#9a9fa6" stroke-width="1.2"/><rect x="1412.6" y="427" width="12.2" height="4.4" fill="#f2f3f4"/><rect x="1412.6" y="434.4" width="12.2" height="3.4" fill="#eceeef"/><rect x="1412.6" y="441" width="12.2" height="3.4" fill="#e8eaec"/><polygon points="1414.6,427.4 1414.6,431.2 1418,429.2" fill="#4a9a5a"/><polygon points="1396.6,440.6 1396.6,457.4 1412.6,449" fill="#3fa564" stroke="#2f8a4e" stroke-width="1"/></g>
<g><path d="M197.6,610 h15.6 l8,8 v23 h-23.6 z" fill="#e3ecf9" stroke="#b3a574" stroke-width="2"/><path d="M213.2,610 v8 h8 z" fill="#e8c66a" stroke="#c8a85a" stroke-width="1"/><text x="198.2" y="636.4" font-family="Liberation Sans,DejaVu Sans,sans-serif" font-weight="bold" font-size="24" letter-spacing="-1" fill="#3a68a8">.c</text></g>
<g><path d="M1004.2,610.4 h15.6 l8,8 v23 h-23.6 z" fill="#e3ecf9" stroke="#b3a574" stroke-width="2"/><path d="M1019.8000000000001,610.4 v8 h8 z" fill="#e8c66a" stroke="#c8a85a" stroke-width="1"/><text x="1004.8000000000001" y="636.8" font-family="Liberation Sans,DejaVu Sans,sans-serif" font-weight="bold" font-size="24" letter-spacing="-1" fill="#3a68a8">.c</text></g>
<g><rect x="387.6" y="610" width="33.4" height="31.4" fill="#e6effa" stroke="#b3a574" stroke-width="2"/><rect x="388.6" y="610" width="31.4" height="6.4" fill="#3b7acb"/><rect x="388.6" y="616.4" width="31.4" height="1.6" fill="#9cc0ea"/><text x="396" y="637.6" font-family="Liberation Sans,DejaVu Sans,sans-serif" font-weight="bold" font-size="27" fill="#3a68a8">c</text></g>
<polygon points="1138.5,615.3 1142.7,615.3 1149.4,622.0 1156.1,615.3 1160.3,615.3 1160.3,619.5 1153.6,626.2 1160.3,632.9 1160.3,637.1 1156.1,637.1 1149.4,630.4 1142.7,637.1 1138.5,637.1 1138.5,632.9 1145.2,626.2 1138.5,619.5" fill="#fff" stroke="#0a0a0a" stroke-width="2.4" stroke-linejoin="miter"/>
<rect x="1607.5" y="617.9" width="11.4" height="4" fill="#fff" stroke="#5c5c5c" stroke-width="1.1"/>
<g><rect x="1650.1" y="618.1" width="11.2" height="11" fill="#fff" stroke="#4e4e4e" stroke-width="1.1"/><rect x="1650.1" y="620.3000000000001" width="11.2" height="1" fill="#5a5a5a"/></g>
<g><rect x="1724" y="610.4" width="12.6" height="12.4" fill="#b4d8f8" stroke="#3f7cc6" stroke-width="2.2"/><rect x="1726" y="612.4" width="8.6" height="4" fill="#e4f2fd"/><rect x="1724" y="631.6" width="12.6" height="12.4" fill="#b4d8f8" stroke="#3f7cc6" stroke-width="2.2"/><rect x="1726" y="633.6" width="8.6" height="4" fill="#e4f2fd"/><rect x="1741" y="617" width="13.6" height="2" fill="#5a8fcc"/><rect x="1741" y="638.6" width="13.6" height="2" fill="#5a8fcc"/><rect x="1741.6" y="624.4" width="6.4" height="6.4" fill="#cfe4f8" stroke="#3f7cc0" stroke-width="1.6"/><rect x="1750.6" y="626.6" width="3.6" height="2" fill="#5a8fcc"/></g>
<g fill="#3548b8"><rect x="1879.6" y="614.4" width="7" height="3.2"/><rect x="1889" y="614.4" width="6" height="3.2"/><rect x="1897.6" y="614.4" width="5" height="3.2"/><rect x="1905.4" y="614.4" width="4" height="3.2"/><rect x="1912" y="614.4" width="2.6" height="3.2"/><rect x="1916.4" y="614.4" width="2" height="3.2"/><rect x="1879.6" y="624" width="9" height="3.2"/><rect x="1891" y="624" width="7" height="3.2"/><rect x="1900.6" y="624" width="4" height="3.2"/><rect x="1907.4" y="624" width="2.6" height="3.2"/><rect x="1913" y="624" width="2" height="3.2"/><rect x="1879.6" y="633.8" width="28" height="3.6"/></g>
<g><rect x="1732.6" y="714.6" width="27.4" height="21.12" rx="3.6" fill="#f2f6fd" stroke="#2d5fa9" stroke-width="4.6"/><rect x="1740.962" y="737.52" width="10.676" height="2.8259999999999996" fill="#2f63ae"/><rect x="1734.368" y="740.546" width="23.864" height="3.4539999999999997" rx="1" fill="#3568b4"/><rect x="1738.136" y="720.136" width="11.303999999999998" height="2.4" fill="#5674b4"/><rect x="1738.136" y="725.16" width="15.7" height="2.4" fill="#6f8ac4"/></g>
<!--/ICONS-->
</svg>

<!-- ===== tooltip ===== -->
<div id="tooltip" class="abs" style="left:765px;top:113px;width:186px;height:53px;border-radius:9px;background:#1c1c1c;box-shadow:0 2px 8px rgba(0,0,0,.35);">
<!--TIP-->
 <span class="ui" style="left:12.5px;top:14.8px;color:#fff;font-size:25px;letter-spacing:0.403px">Step Into (F5)</span>
<!--/TIP-->
</div>

<svg id="cursor" style="left:0;top:0" width="1920" height="130" viewBox="0 0 1920 130">
<!--CURSOR-->
<path d="M853.4,89.6 v24.6 l5.6,-5.2 l4,9.2 l4.2,-1.8 l-4,-9 h7.8 z" fill="#151515" stroke="#fff" stroke-width="1.6" stroke-linejoin="round"/>
<!--/CURSOR-->
</svg>

</body>
</html>
